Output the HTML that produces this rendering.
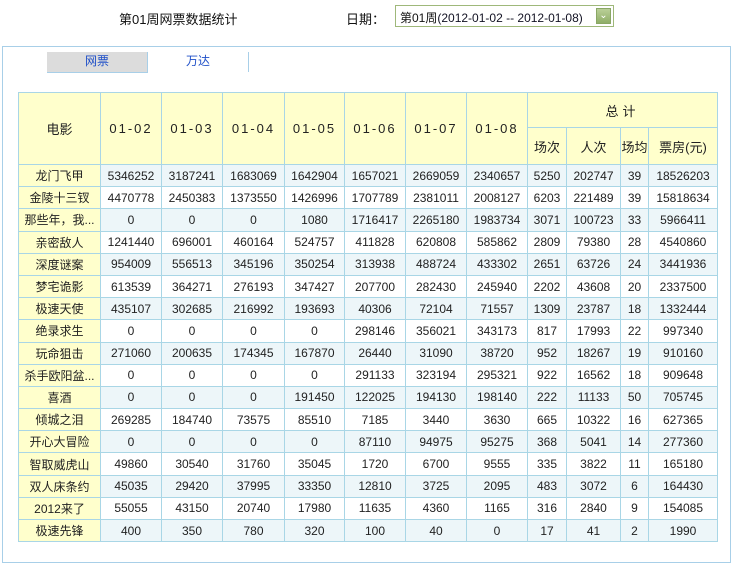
<!DOCTYPE html>
<html><head><meta charset="utf-8"><style>
*{margin:0;padding:0;box-sizing:border-box}
body{width:733px;height:564px;background:#fff;font-family:"Liberation Sans","Noto Sans CJK SC",sans-serif;font-size:12px;color:#222;position:relative;overflow:hidden}
.title{position:absolute;left:119px;top:9px;font-size:13px;color:#111}
.dl{position:absolute;left:346px;top:9px;font-size:13px;color:#111}
.sel{position:absolute;left:395px;top:5px;width:219px;height:22px;border:1px solid #9fb87a;font-size:12px;padding:3px 0 0 4px;color:#111;white-space:nowrap}
.sel span{color:#112}
.arr{position:absolute;right:2px;top:2px;width:15px;height:16px;background:linear-gradient(#b9cf97,#8fae68);border:1px solid #8aa765;color:#fff;font-size:10px;text-align:center;line-height:14px}
.box{position:absolute;left:2px;top:46px;width:729px;height:517px;border:1px solid #a8cfe8}
.tab1{position:absolute;left:47px;top:52px;width:101px;height:21px;background:#dcdcdc;border-right:1px solid #a8cfe8;border-bottom:1px solid #a8cfe8;color:#2050c8;text-align:center;line-height:19px}
.tab2{position:absolute;left:148px;top:52px;width:100px;height:20px;color:#2050c8;text-align:center;line-height:19px}
.div{position:absolute;left:248px;top:52px;width:1px;height:20px;background:#a8cfe8}
table{position:absolute;left:18px;top:92px;border-collapse:collapse;table-layout:fixed;width:699px}
td{border:1px solid #a9d6e6;text-align:center;white-space:nowrap;overflow:hidden;font-size:12px;padding:0}
.h td{background:#ffffcc;font-size:13px}
.d{letter-spacing:2px}
tbody.b tr{height:22.2px}
tbody.b td:first-child{background:#ffffcc}
tbody.b tr:nth-child(odd) td{background:#edf6f9}
tbody.b tr:nth-child(odd) td:first-child{background:#ffffcc}
</style></head><body>
<div class="title">第01周网票数据统计</div>
<div class="dl">日期：</div>
<div class="sel">第01周<span>(2012-01-02 -- 2012-01-08)</span><div class="arr">⌄</div></div>
<div class="box"></div>
<div class="tab1">网票</div><div class="tab2">万达</div><div class="div"></div>
<table>
<colgroup><col style="width:82px"><col style="width:61px"><col style="width:61px"><col style="width:62px"><col style="width:60px"><col style="width:61px"><col style="width:61px"><col style="width:61px"><col style="width:39px"><col style="width:54px"><col style="width:28px"><col style="width:69px"></colgroup>
<tbody class="h">
<tr style="height:35px"><td rowspan="2">电影</td><td rowspan="2" class="d">01-02</td><td rowspan="2" class="d">01-03</td><td rowspan="2" class="d">01-04</td><td rowspan="2" class="d">01-05</td><td rowspan="2" class="d">01-06</td><td rowspan="2" class="d">01-07</td><td rowspan="2" class="d">01-08</td><td colspan="4" style="letter-spacing:4px">总计</td></tr>
<tr style="height:37px"><td>场次</td><td>人次</td><td>场均</td><td>票房(元)</td></tr>
</tbody>
<tbody class="b">
<tr><td>龙门飞甲</td><td>5346252</td><td>3187241</td><td>1683069</td><td>1642904</td><td>1657021</td><td>2669059</td><td>2340657</td><td>5250</td><td>202747</td><td>39</td><td>18526203</td></tr>
<tr><td>金陵十三钗</td><td>4470778</td><td>2450383</td><td>1373550</td><td>1426996</td><td>1707789</td><td>2381011</td><td>2008127</td><td>6203</td><td>221489</td><td>39</td><td>15818634</td></tr>
<tr><td>那些年，我...</td><td>0</td><td>0</td><td>0</td><td>1080</td><td>1716417</td><td>2265180</td><td>1983734</td><td>3071</td><td>100723</td><td>33</td><td>5966411</td></tr>
<tr><td>亲密敌人</td><td>1241440</td><td>696001</td><td>460164</td><td>524757</td><td>411828</td><td>620808</td><td>585862</td><td>2809</td><td>79380</td><td>28</td><td>4540860</td></tr>
<tr><td>深度谜案</td><td>954009</td><td>556513</td><td>345196</td><td>350254</td><td>313938</td><td>488724</td><td>433302</td><td>2651</td><td>63726</td><td>24</td><td>3441936</td></tr>
<tr><td>梦宅诡影</td><td>613539</td><td>364271</td><td>276193</td><td>347427</td><td>207700</td><td>282430</td><td>245940</td><td>2202</td><td>43608</td><td>20</td><td>2337500</td></tr>
<tr><td>极速天使</td><td>435107</td><td>302685</td><td>216992</td><td>193693</td><td>40306</td><td>72104</td><td>71557</td><td>1309</td><td>23787</td><td>18</td><td>1332444</td></tr>
<tr><td>绝录求生</td><td>0</td><td>0</td><td>0</td><td>0</td><td>298146</td><td>356021</td><td>343173</td><td>817</td><td>17993</td><td>22</td><td>997340</td></tr>
<tr><td>玩命狙击</td><td>271060</td><td>200635</td><td>174345</td><td>167870</td><td>26440</td><td>31090</td><td>38720</td><td>952</td><td>18267</td><td>19</td><td>910160</td></tr>
<tr><td>杀手欧阳盆...</td><td>0</td><td>0</td><td>0</td><td>0</td><td>291133</td><td>323194</td><td>295321</td><td>922</td><td>16562</td><td>18</td><td>909648</td></tr>
<tr><td>喜酒</td><td>0</td><td>0</td><td>0</td><td>191450</td><td>122025</td><td>194130</td><td>198140</td><td>222</td><td>11133</td><td>50</td><td>705745</td></tr>
<tr><td>倾城之泪</td><td>269285</td><td>184740</td><td>73575</td><td>85510</td><td>7185</td><td>3440</td><td>3630</td><td>665</td><td>10322</td><td>16</td><td>627365</td></tr>
<tr><td>开心大冒险</td><td>0</td><td>0</td><td>0</td><td>0</td><td>87110</td><td>94975</td><td>95275</td><td>368</td><td>5041</td><td>14</td><td>277360</td></tr>
<tr><td>智取威虎山</td><td>49860</td><td>30540</td><td>31760</td><td>35045</td><td>1720</td><td>6700</td><td>9555</td><td>335</td><td>3822</td><td>11</td><td>165180</td></tr>
<tr><td>双人床条约</td><td>45035</td><td>29420</td><td>37995</td><td>33350</td><td>12810</td><td>3725</td><td>2095</td><td>483</td><td>3072</td><td>6</td><td>164430</td></tr>
<tr><td>2012来了</td><td>55055</td><td>43150</td><td>20740</td><td>17980</td><td>11635</td><td>4360</td><td>1165</td><td>316</td><td>2840</td><td>9</td><td>154085</td></tr>
<tr><td>极速先锋</td><td>400</td><td>350</td><td>780</td><td>320</td><td>100</td><td>40</td><td>0</td><td>17</td><td>41</td><td>2</td><td>1990</td></tr>
</tbody></table>
</body></html>
